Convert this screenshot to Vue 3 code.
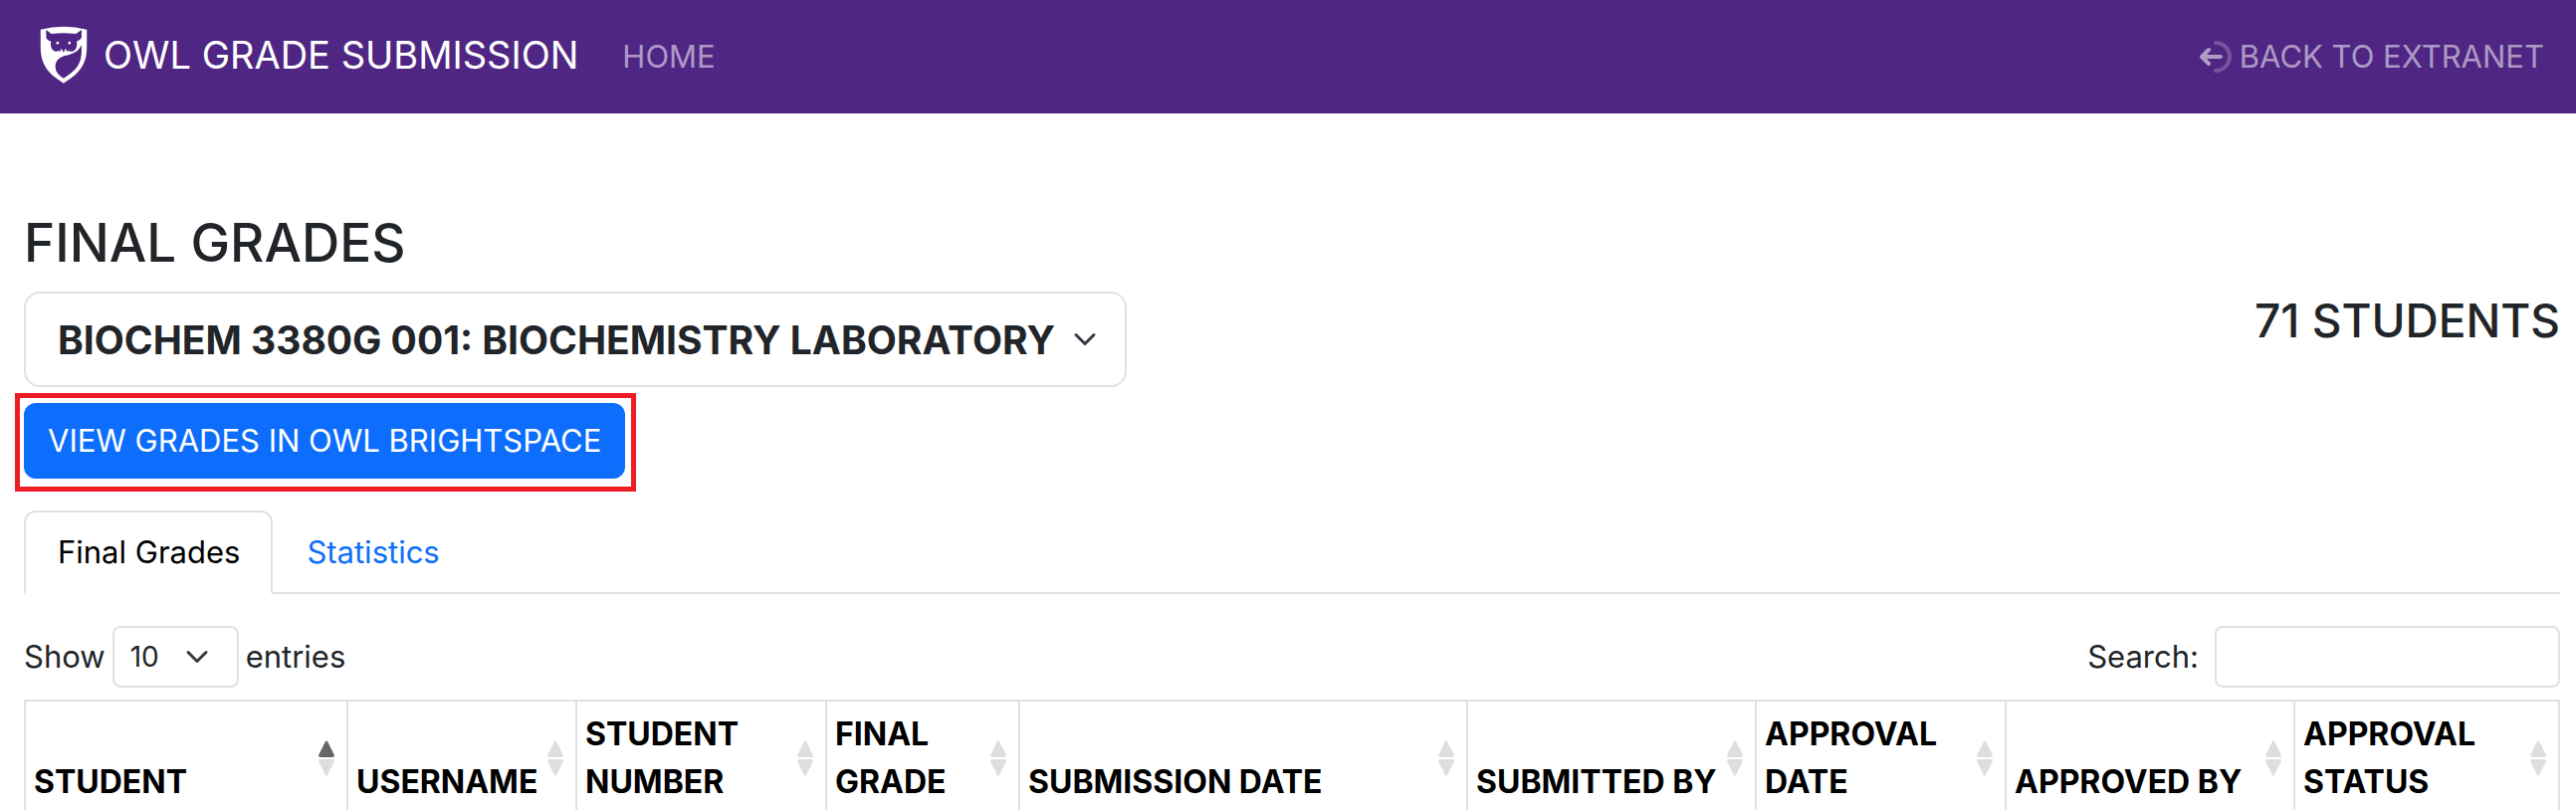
<template>
  <header class="navbar">
    <a class="brand" href="#">
      <svg class="brand-logo" viewBox="35 28 143 176" aria-hidden="true">
        <path fill="#fff" d="M36 39Q106 21 177 39V92C177 148 152 175 106 203C60 175 36 148 36 92Z" />
        <g fill="#4f2683">
          <path d="M53 40L69 52Q106 48 144 52L161 40V64Q157 73 146 75L140 95H73L68 75Q56 73 53 64Z" />
          <path d="M68 72H146C149 92 144 105 130 106Q125 107 121 103L117 108L113 98H99L95 108L91 103Q87 107 82 106C68 103 65 88 68 72Z" />
          <path d="M99 96H113L106 109Z" />
          <path d="M161 86V104C161 143 146 164 106 188Q82 174 81 153C80 125 105 120 125 115Q153 108 161 86Z" />
        </g>
        <circle cx="88" cy="80" r="4" fill="#fff" />
        <circle cx="124" cy="80" r="4" fill="#fff" />
      </svg>
      <span>OWL GRADE SUBMISSION</span>
    </a>
    <nav class="nav-links">
      <a href="#">HOME</a>
      <a class="nav-back" href="#">
        <svg class="back-icon" viewBox="0 0 32 34" fill="none" stroke="currentColor" stroke-linecap="round" stroke-linejoin="round" aria-hidden="true">
          <path d="M16 3A14 14 0 0 1 16 31" stroke-width="4" opacity="0.4" />
          <path d="M21 17H3M9 10L2 17L9 24" stroke-width="4" />
        </svg>
        BACK TO EXTRANET
      </a>
    </nav>
  </header>

  <main class="page">
    <h1>FINAL GRADES</h1>

    <div class="section-row">
      <div class="section-actions">
        <select class="form-select section-select" aria-label="Section">
          <option>BIOCHEM 3380G 001: BIOCHEMISTRY LABORATORY</option>
        </select>
        <div class="highlight">
          <button class="btn-primary" type="button">VIEW GRADES IN OWL BRIGHTSPACE</button>
        </div>
      </div>
      <h2>71 STUDENTS</h2>
    </div>

    <nav class="tabs">
      <a
        v-for="tab in tabs"
        :key="tab"
        href="#"
        class="tab"
        :class="{ active: tab === activeTab }"
        @click.prevent="activeTab = tab"
      >{{ tab }}</a>
    </nav>

    <div class="table-controls">
      <label class="length">
        Show
        <select v-model="pageSize" class="form-select length-select">
          <option v-for="n in [10, 25, 50, 100]" :key="n" :value="n">{{ n }}</option>
        </select>
        entries
      </label>
      <label class="search">
        Search:
        <input v-model="search" type="search">
      </label>
    </div>

    <table class="grades">
      <colgroup>
        <col v-for="col in columns" :key="col.label" :style="{ width: col.width + 'px' }">
      </colgroup>
      <thead>
        <tr>
          <th v-for="col in columns" :key="col.label" scope="col">
            {{ col.label }}
            <svg class="sort" viewBox="0 0 16 36" aria-hidden="true">
              <path :class="{ on: col.sorted }" d="M7 1Q8 0 9 1L16 15Q16 17 14 17H2Q0 17 0 15Z" />
              <path d="M7 35Q8 36 9 35L16 21Q16 19 14 19H2Q0 19 0 21Z" />
            </svg>
          </th>
        </tr>
      </thead>
    </table>
  </main>
</template>

<script setup>
import { ref } from 'vue'

const tabs = ['Final Grades', 'Statistics']
const activeTab = ref('Final Grades')
const pageSize = ref(10)
const search = ref('')

const columns = [
  { label: 'STUDENT',         width: 324, sorted: true },
  { label: 'USERNAME',        width: 230 },
  { label: 'STUDENT NUMBER',  width: 251 },
  { label: 'FINAL GRADE',     width: 194 },
  { label: 'SUBMISSION DATE', width: 450 },
  { label: 'SUBMITTED BY',    width: 290 },
  { label: 'APPROVAL DATE',   width: 251 },
  { label: 'APPROVED BY',     width: 290 },
  { label: 'APPROVAL STATUS', width: 266 },
]
</script>

<style>
body {
  margin: 0;
  background: #fff;
  overflow: hidden;
}
</style>

<style scoped>
.navbar, .page {
  font-family: Inter, "Liberation Sans", sans-serif;
  font-size: 31px;
  line-height: 48px;
  color: #212529;
  box-sizing: border-box;
}

/* Navbar */
.navbar {
  display: flex;
  align-items: center;
  gap: 44px;
  min-height: 114px;
  padding: 0 32px 0 40px;
  background: #4f2683;
}
.navbar a { text-decoration: none; }
.brand {
  display: flex;
  align-items: center;
  gap: 16px;
  padding-bottom: 4px;
  color: #fff;
  font-size: 38px;
  white-space: nowrap;
}
.brand-logo { width: 48px; height: 58px; }
.nav-links {
  flex: 1;
  display: flex;
  justify-content: space-between;
}
.nav-links a { color: rgba(255,255,255,0.55); }
.nav-back {
  display: flex;
  align-items: center;
  gap: 8px;
}
.back-icon { width: 32px; height: 34px; }

/* Section header */
.page { padding: 96px 16px 0 24px; }
h1 {
  margin: 0 0 14px;
  font-size: 53px;
  font-weight: 500;
  line-height: 69px;
}
h2 {
  margin: 0;
  font-size: 46px;
  font-weight: 500;
  line-height: 58px;
}
.section-row {
  display: flex;
  justify-content: space-between;
  align-items: flex-start;
}
.section-actions {
  display: flex;
  flex-direction: column;
  align-items: flex-start;
  gap: 16px;
}

.form-select {
  appearance: none;
  box-sizing: border-box;
  margin: 0;
  border: 2px solid #dee2e6;
  font-family: inherit;
  color: #212529;
  background: #fff url("data:image/svg+xml,%3Csvg xmlns='http://www.w3.org/2000/svg' viewBox='0 0 16 16'%3E%3Cpath fill='none' stroke='%23343a40' stroke-linecap='round' stroke-linejoin='round' stroke-width='2' d='m2 5 6 6 6-6'/%3E%3C/svg%3E") no-repeat right 28px center / 24px 24px;
}
.section-select {
  height: 96px;
  padding: 0 70px 0 32px;
  border-radius: 16px;
  font-size: 39px;
  font-weight: 700;
}

.highlight { position: relative; }
.highlight::after {
  content: "";
  position: absolute;
  inset: -10px -11px -13px -9px;
  border: 5px solid #ed1c24;
  pointer-events: none;
}
.btn-primary {
  display: block;
  height: 76px;
  padding: 0 24px;
  border: 0;
  border-radius: 12px;
  background: #0d6efd;
  color: #fff;
  font: inherit;
  cursor: pointer;
}

/* Tabs */
.tabs {
  display: flex;
  margin-top: 32px;
  box-shadow: inset 0 -2px #dee2e6;
}
.tab {
  padding: 16px 31px 16px 32px;
  border: 2px solid transparent;
  border-radius: 12px 12px 0 0;
  color: #0d6efd;
  text-decoration: none;
}
.tab.active {
  color: #000;
  background: #fff;
  border-color: #dee2e6 #dee2e6 #fff;
}

/* Table controls */
.table-controls {
  display: flex;
  justify-content: space-between;
  margin: 32px 0 12px;
}
.length {
  display: flex;
  align-items: center;
  gap: 7px;
}
.length-select {
  width: 127px;
  height: 62px;
  padding: 0 16px;
  border-radius: 8px;
  font-size: 28px;
}
.search {
  display: flex;
  align-items: center;
  gap: 16px;
}
.search input {
  box-sizing: border-box;
  width: 347px;
  height: 62px;
  padding: 0 16px;
  border: 2px solid #dee2e6;
  border-radius: 8px;
  font: inherit;
  font-size: 28px;
}

.grades {
  width: 100%;
  table-layout: fixed;
  border-collapse: collapse;
}
.grades th {
  position: relative;
  padding: 9px 36px 8px 8px;
  border: 2px solid #dee2e6;
  color: #000;
  font-size: 32px;
  font-weight: 700;
  text-align: left;
  vertical-align: bottom;
}
.sort {
  position: absolute;
  right: 12px;
  top: 50%;
  width: 16px;
  height: 36px;
  margin-top: -18px;
  fill: #dedede;
}
.sort .on { fill: #666; }
</style>
